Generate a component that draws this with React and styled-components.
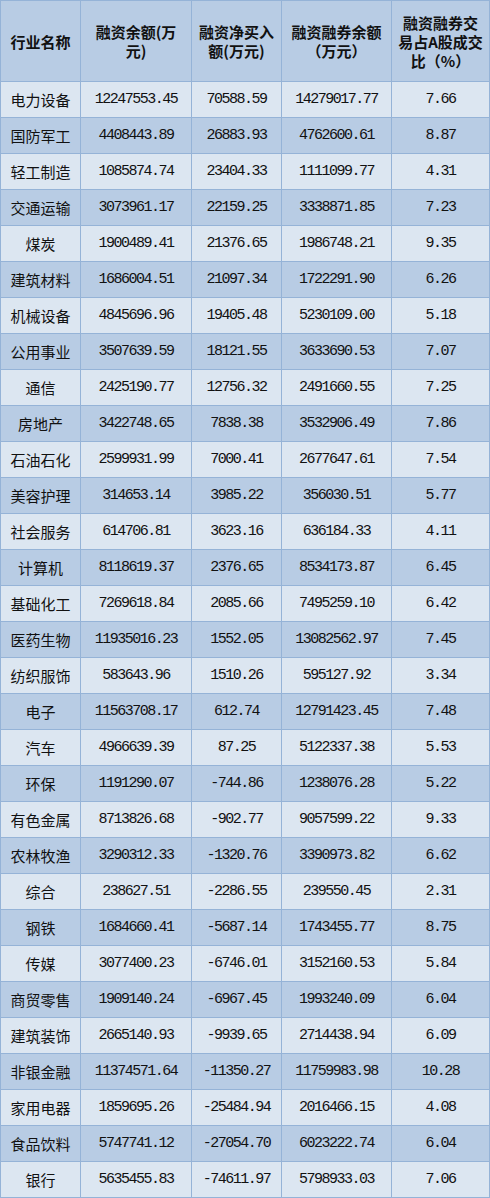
import React from "react";
import styled, { createGlobalStyle } from "styled-components";

const GlobalStyle = createGlobalStyle`
  html, body {
    margin: 0;
    padding: 0;
    background: #ffffff;
  }
`;

const Table = styled.table`
  width: 489px;
  table-layout: fixed;
  border-collapse: collapse;
  font-family: "Noto Sans CJK SC", "Liberation Sans", sans-serif;
  color: #111;
`;

const HeadCell = styled.th`
  height: 80px;
  padding: 0;
  background: #b8cce4;
  border: 1px solid #95b3d7;
  font-size: 15px;
  line-height: 19px;
  font-weight: 700;
  text-align: center;
  vertical-align: middle;
`;

const Row = styled.tr`
  background: ${(p) => (p.$dark ? "#b8cce4" : "#dce6f1")};
`;

const Cell = styled.td`
  height: 35px;
  padding: 0;
  border: 1px solid #95b3d7;
  text-align: center;
  vertical-align: middle;
  white-space: nowrap;
  font-size: ${(p) => (p.$num ? "15px" : "15px")};
  font-family: ${(p) =>
    p.$num
      ? '"Liberation Mono", "DejaVu Sans Mono", monospace'
      : '"Noto Sans CJK SC", "Liberation Sans", sans-serif'};
  letter-spacing: ${(p) => (p.$num ? "-1.5px" : "0")};
`;

const columns = [
  { w: 80, label: ["行业名称"] },
  { w: 111, label: ["融资余额(万", "元)"] },
  { w: 90, label: ["融资净买入", "额(万元)"] },
  { w: 110, label: ["融资融券余额", "（万元）"] },
  { w: 98, label: ["融资融券交", "易占A股成交", "比（%）"] },
];

const rows = [
  ["电力设备", "12247553.45", "70588.59", "14279017.77", "7.66"],
  ["国防军工", "4408443.89", "26883.93", "4762600.61", "8.87"],
  ["轻工制造", "1085874.74", "23404.33", "1111099.77", "4.31"],
  ["交通运输", "3073961.17", "22159.25", "3338871.85", "7.23"],
  ["煤炭", "1900489.41", "21376.65", "1986748.21", "9.35"],
  ["建筑材料", "1686004.51", "21097.34", "1722291.90", "6.26"],
  ["机械设备", "4845696.96", "19405.48", "5230109.00", "5.18"],
  ["公用事业", "3507639.59", "18121.55", "3633690.53", "7.07"],
  ["通信", "2425190.77", "12756.32", "2491660.55", "7.25"],
  ["房地产", "3422748.65", "7838.38", "3532906.49", "7.86"],
  ["石油石化", "2599931.99", "7000.41", "2677647.61", "7.54"],
  ["美容护理", "314653.14", "3985.22", "356030.51", "5.77"],
  ["社会服务", "614706.81", "3623.16", "636184.33", "4.11"],
  ["计算机", "8118619.37", "2376.65", "8534173.87", "6.45"],
  ["基础化工", "7269618.84", "2085.66", "7495259.10", "6.42"],
  ["医药生物", "11935016.23", "1552.05", "13082562.97", "7.45"],
  ["纺织服饰", "583643.96", "1510.26", "595127.92", "3.34"],
  ["电子", "11563708.17", "612.74", "12791423.45", "7.48"],
  ["汽车", "4966639.39", "87.25", "5122337.38", "5.53"],
  ["环保", "1191290.07", "-744.86", "1238076.28", "5.22"],
  ["有色金属", "8713826.68", "-902.77", "9057599.22", "9.33"],
  ["农林牧渔", "3290312.33", "-1320.76", "3390973.82", "6.62"],
  ["综合", "238627.51", "-2286.55", "239550.45", "2.31"],
  ["钢铁", "1684660.41", "-5687.14", "1743455.77", "8.75"],
  ["传媒", "3077400.23", "-6746.01", "3152160.53", "5.84"],
  ["商贸零售", "1909140.24", "-6967.45", "1993240.09", "6.04"],
  ["建筑装饰", "2665140.93", "-9939.65", "2714438.94", "6.09"],
  ["非银金融", "11374571.64", "-11350.27", "11759983.98", "10.28"],
  ["家用电器", "1859695.26", "-25484.94", "2016466.15", "4.08"],
  ["食品饮料", "5747741.12", "-27054.70", "6023222.74", "6.04"],
  ["银行", "5635455.83", "-74611.97", "5798933.03", "7.06"],
];

export default function App() {
  return (
    <>
      <GlobalStyle />
      <Table>
        <colgroup>
          {columns.map((c, i) => (
            <col key={i} style={{ width: c.w }} />
          ))}
        </colgroup>
        <thead>
          <tr>
            {columns.map((c, i) => (
              <HeadCell key={i}>
                {c.label.map((line, j) => (
                  <React.Fragment key={j}>
                    {j > 0 && <br />}
                    {line}
                  </React.Fragment>
                ))}
              </HeadCell>
            ))}
          </tr>
        </thead>
        <tbody>
          {rows.map((r, i) => (
            <Row key={r[0]} $dark={i % 2 === 1}>
              {r.map((v, j) => (
                <Cell key={j} $num={j > 0}>
                  {v}
                </Cell>
              ))}
            </Row>
          ))}
        </tbody>
      </Table>
    </>
  );
}
